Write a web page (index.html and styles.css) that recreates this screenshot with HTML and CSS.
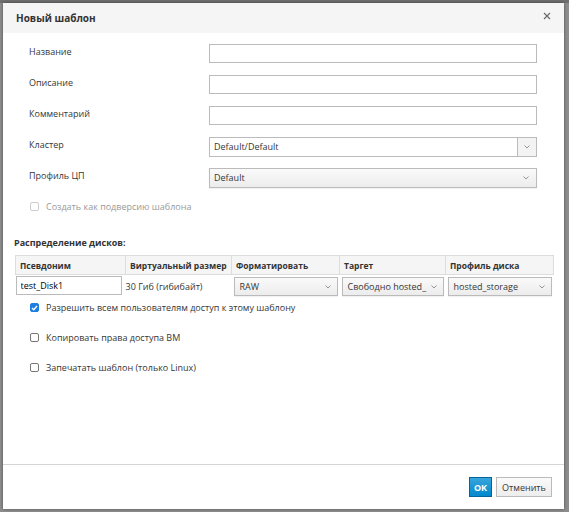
FILE: index.html
```html
<!DOCTYPE html>
<html lang="ru">
<head>
    <meta charset="UTF-8" />
    <title>Новый шаблон</title>
    <link rel="stylesheet" href="styles.css">
</head>
<body>
    <div class="top-strip"></div>
    <div class="modal">
        <div class="modal-header">
            <h4 class="modal-title">Новый шаблон</h4>
            <span class="close">
                <svg width="8" height="8" viewBox="0 0 8 8"><path d="M1 1 L7 7 M7 1 L1 7" stroke="#6a6a6a" stroke-width="1.2"/></svg>
            </span>
        </div>

        <div class="modal-body">
            <div class="form-row">
                <label>Название</label>
                <input class="text-input" type="text">
            </div>
            <div class="form-row">
                <label>Описание</label>
                <input class="text-input" type="text">
            </div>
            <div class="form-row">
                <label>Комментарий</label>
                <input class="text-input" type="text">
            </div>
            <div class="form-row">
                <label>Кластер</label>
                <div class="combo">
                    <span class="combo-value">Default/Default</span>
                    <span class="combo-btn">
                        <svg width="6" height="4" viewBox="0 0 6 4"><polyline points="0.5,0.5 3,3 5.5,0.5" fill="none" stroke="#8a8a8a" stroke-width="0.9"/></svg>
                    </span>
                </div>
            </div>
            <div class="form-row">
                <label>Профиль ЦП</label>
                <div class="select wide">
                    <span>Default</span>
                    <svg width="6" height="4" viewBox="0 0 6 4"><polyline points="0.5,0.5 3,3 5.5,0.5" fill="none" stroke="#8a8a8a" stroke-width="0.9"/></svg>
                </div>
            </div>
            <div class="check-row disabled">
                <span class="checkbox"></span>
                <span>Создать как подверсию шаблона</span>
            </div>

            <h5 class="section-title">Распределение дисков:</h5>
            <table class="disks">
                <thead>
                    <tr>
                        <th class="c1">Псевдоним</th>
                        <th class="c2">Виртуальный размер</th>
                        <th class="c3">Форматировать</th>
                        <th class="c4">Таргет</th>
                        <th class="c5">Профиль диска</th>
                    </tr>
                </thead>
                <tbody>
                    <tr>
                        <td><input class="alias-input" type="text" value="test_Disk1"></td>
                        <td class="size">30 Гиб (гибибайт)</td>
                        <td>
                            <div class="select cell">
                                <span>RAW</span>
                                <svg width="6" height="4" viewBox="0 0 6 4"><polyline points="0.5,0.5 3,3 5.5,0.5" fill="none" stroke="#8a8a8a" stroke-width="0.9"/></svg>
                            </div>
                        </td>
                        <td>
                            <div class="select cell">
                                <span>Свободно hosted_</span>
                                <svg width="6" height="4" viewBox="0 0 6 4"><polyline points="0.5,0.5 3,3 5.5,0.5" fill="none" stroke="#8a8a8a" stroke-width="0.9"/></svg>
                            </div>
                        </td>
                        <td>
                            <div class="select cell">
                                <span>hosted_storage</span>
                                <svg width="6" height="4" viewBox="0 0 6 4"><polyline points="0.5,0.5 3,3 5.5,0.5" fill="none" stroke="#8a8a8a" stroke-width="0.9"/></svg>
                            </div>
                        </td>
                    </tr>
                </tbody>
            </table>

            <div class="options">
                <div class="check-row">
                    <span class="checkbox checked">
                        <svg width="7" height="6" viewBox="0 0 7 6"><polyline points="1,3 2.8,4.8 6,1" fill="none" stroke="#fff" stroke-width="1.4"/></svg>
                    </span>
                    <span>Разрешить всем пользователям доступ к этому шаблону</span>
                </div>
                <div class="check-row">
                    <span class="checkbox"></span>
                    <span>Копировать права доступа ВМ</span>
                </div>
                <div class="check-row">
                    <span class="checkbox"></span>
                    <span>Запечатать шаблон (только Linux)</span>
                </div>
            </div>
        </div>

        <div class="modal-footer">
            <button class="btn btn-primary">OK</button>
            <button class="btn btn-default">Отменить</button>
        </div>
    </div>
</body>
</html>
```

FILE: styles.css
```css
* {
    box-sizing: border-box;
}
html, body {
    margin: 0;
    height: 100%;
}
body {
    background: #8d8d8d;
    font-family: 'Open Sans', 'Noto Sans', sans-serif;
    font-size: 9px;
    color: #363636;
    padding: 3px 5px 3px 3px;
    position: relative;
}
.top-strip {
    position: absolute;
    top: 0;
    left: 0;
    right: 0;
    height: 3px;
    background: #6f6f6f;
}
.modal {
    position: relative;
    width: 561px;
    height: 506px;
    background: #fff;
    display: flex;
    flex-direction: column;
    box-shadow: 0 0 3px rgba(0, 0, 0, 0.45);
}
.modal-header {
    height: 30px;
    background: #f5f5f5;
    display: flex;
    align-items: center;
    justify-content: space-between;
    padding: 0 13px;
}
.modal-title {
    margin: 0;
    font-size: 10px;
    font-weight: 700;
    color: #333;
}
.close {
    display: flex;
    margin-top: -4px;
}
.modal-body {
    flex: 1;
    padding-top: 11px;
}
.form-row {
    display: flex;
    align-items: center;
    height: 19px;
    margin-bottom: 12px;
    padding-left: 26px;
}
.form-row label {
    width: 180px;
    margin-top: -5px;
}
.text-input {
    width: 328px;
    height: 19px;
    border: 1px solid #bbb;
    padding: 0 4px;
    font: inherit;
    outline: none;
}
.combo {
    width: 328px;
    height: 20px;
    border: 1px solid #bbb;
    display: flex;
    align-items: stretch;
}
.combo-value {
    flex: 1;
    display: flex;
    align-items: center;
    padding-left: 4px;
}
.combo-btn {
    width: 19px;
    border-left: 1px solid #bbb;
    background: #f3f3f3;
    display: flex;
    align-items: center;
    justify-content: center;
}
.select {
    display: flex;
    align-items: center;
    justify-content: space-between;
    border: 1px solid #bbb;
    background: linear-gradient(#fafafa, #ececec);
    box-shadow: 0 1px 1px rgba(0, 0, 0, 0.05);
    padding: 0 6px 0 5px;
}
.select.wide {
    width: 328px;
    height: 20px;
    padding: 0 7px 0 4px;
}
.select.cell {
    height: 19px;
    margin-top: 2px;
}
.check-row {
    display: flex;
    align-items: center;
    height: 14px;
    padding-left: 27px;
    gap: 7px;
}
.check-row.disabled {
    color: #999;
}
.checkbox {
    width: 9px;
    height: 9px;
    border: 1px solid #777;
    border-radius: 2px;
    background: #fff;
    display: flex;
    align-items: center;
    justify-content: center;
}
.check-row.disabled .checkbox {
    border-color: #ccc;
}
.checkbox.checked {
    background: #1c7fe0;
    border-color: #1c7fe0;
}
.section-title {
    margin: 24px 0 6px 11px;
    font-size: 9px;
    font-weight: 700;
    line-height: 12px;
    color: #333;
}
.disks {
    margin-left: 12px;
    width: 538px;
    border-collapse: collapse;
    table-layout: fixed;
}
.disks th {
    height: 19px;
    background: #f5f5f5;
    border: 1px solid #ddd;
    text-align: left;
    font-size: 8.5px;
    font-weight: 700;
    padding: 0 0 0 4px;
    color: #333;
}
.disks .c1 { width: 110px; }
.disks .c2 { width: 106px; }
.disks .c3 { width: 108px; }
.disks .c4 { width: 106px; }
.disks .c5 { width: 108px; }
.disks td {
    padding: 0 2px 0 2px;
    height: 25px;
    vertical-align: top;
}
.disks td:first-child {
    padding-left: 0;
}
.disks td.size {
    padding: 5px 0 0 0;
}
.alias-input {
    width: 106px;
    height: 19px;
    margin-top: 1px;
    border: 1px solid #bbb;
    padding: 0 4px;
    font: inherit;
    outline: none;
}
.options {
    padding-top: 1px;
}
.options .check-row {
    margin-bottom: 16px;
}
.modal-footer {
    border-top: 1px solid #d5d5d5;
    height: 45px;
    display: flex;
    justify-content: flex-end;
    align-items: flex-start;
    gap: 4px;
    padding: 12px 12px 0 0;
}
.btn {
    height: 20px;
    font-family: inherit;
    font-size: 9px;
    padding: 0 5px;
    cursor: pointer;
}
.btn-primary {
    width: 23px;
    background: linear-gradient(#39a5dc, #0088ce);
    border: 1px solid #00659c;
    color: #fff;
    font-weight: 700;
    padding: 0;
}
.btn-default {
    width: 56px;
    background: linear-gradient(#fafafa, #ededed);
    border: 1px solid #bbb;
    color: #363636;
}
```
